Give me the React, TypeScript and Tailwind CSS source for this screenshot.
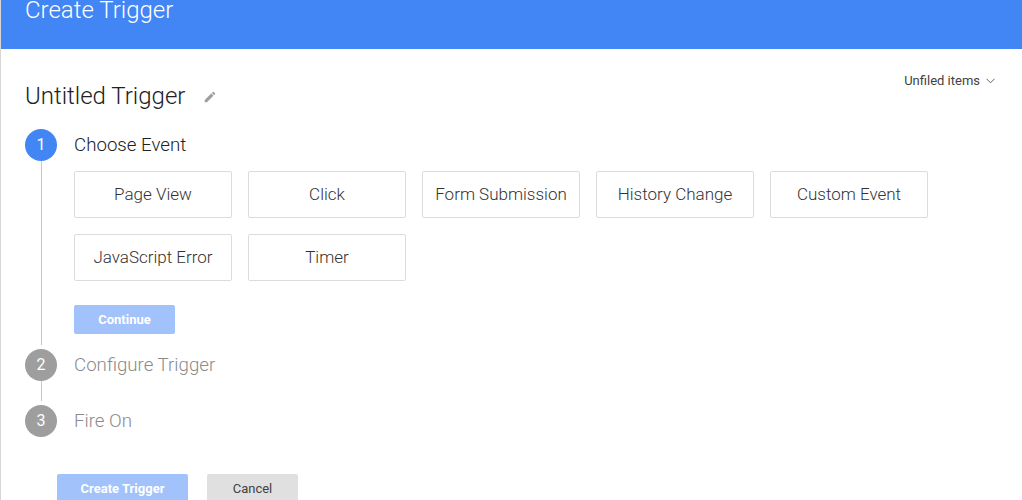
import React from 'react';

const events = [
  'Page View',
  'Click',
  'Form Submission',
  'History Change',
  'Custom Event',
  'JavaScript Error',
  'Timer',
];

const StepCircle = ({ n, active }: { n: number; active?: boolean }) => (
  <div
    className={`w-8 h-8 rounded-full flex items-center justify-center text-white text-[16px] shrink-0 ${
      active ? 'bg-[#4285f4]' : 'bg-[#9e9e9e]'
    }`}
  >
    {n}
  </div>
);

const Pencil = () => (
  <svg width="14" height="14" viewBox="0 0 24 24" fill="#9e9e9e">
    <path d="M3 17.25V21h3.75L17.81 9.94l-3.75-3.75L3 17.25zM20.71 7.04a1 1 0 0 0 0-1.41l-2.34-2.34a1 1 0 0 0-1.41 0l-1.83 1.83 3.75 3.75 1.83-1.83z" />
  </svg>
);

const Chevron = () => (
  <svg width="9" height="6" viewBox="0 0 9 6" fill="none" stroke="#616161" strokeWidth="1">
    <path d="M0.5 0.8 L4.5 4.8 L8.5 0.8" />
  </svg>
);

export default function App() {
  return (
    <div className="w-[1022px] h-[500px] overflow-hidden bg-white border-l border-[#d6d6d6] font-['Roboto',sans-serif]">
      <header className="h-[49px] bg-[#4285f4] pl-[24px]">
        <h1 className="text-white text-[24px] leading-[20px] font-light">Create Trigger</h1>
      </header>

      <div className="pl-[24px] pr-[27px]">
        <div className="flex justify-between items-start">
          <div className="flex items-center mt-[35px]">
            <h2 className="text-[24px] leading-none text-[#212121] font-light">Untitled Trigger</h2>
            <span className="ml-[18px] mt-[2px]">
              <Pencil />
            </span>
          </div>
          <button className="mt-[22px] flex items-center gap-[6px] text-[13px] text-[#424242]">
            Unfiled items
            <Chevron />
          </button>
        </div>

        <div className="mt-[21px]">
          {/* step 1 */}
          <div className="flex">
            <div className="flex flex-col items-center w-8">
              <StepCircle n={1} active />
              <div className="w-px flex-1 bg-[#c8c8c8] mb-[4px]" />
            </div>
            <div className="ml-[17px] pb-[15px]">
              <div className="h-8 flex items-center text-[18.7px] font-light text-[#212121]">Choose Event</div>
              <div className="mt-[10px] grid grid-cols-[repeat(5,158px)] gap-4">
                {events.map((e) => (
                  <button
                    key={e}
                    className="h-[47px] bg-white border border-[#dcdcdc] rounded-[2px] text-[17px] font-light text-[#333]"
                  >
                    {e}
                  </button>
                ))}
              </div>
              <button className="mt-[24px] w-[101px] h-[29px] rounded-[2px] bg-[#a1c2fa] text-white text-[13px] font-bold">
                Continue
              </button>
            </div>
          </div>

          {/* step 2 */}
          <div className="flex">
            <div className="flex flex-col items-center w-8">
              <StepCircle n={2} />
              <div className="w-px h-[20px] bg-[#c8c8c8] mb-[4px]" />
            </div>
            <div className="ml-[17px]">
              <div className="h-8 flex items-center text-[18.7px] font-light text-[#8a8a8a]">Configure Trigger</div>
            </div>
          </div>

          {/* step 3 */}
          <div className="flex">
            <div className="flex flex-col items-center w-8">
              <StepCircle n={3} />
            </div>
            <div className="ml-[17px]">
              <div className="h-8 flex items-center text-[18.7px] font-light text-[#8a8a8a]">Fire On</div>
            </div>
          </div>
        </div>

        <div className="mt-[37px] ml-[32px] flex gap-[19px]">
          <button className="w-[131px] h-[29px] rounded-[2px] bg-[#a1c2fa] text-white text-[13px] font-bold">
            Create Trigger
          </button>
          <button className="w-[91px] h-[29px] rounded-[2px] bg-[#e0e0e0] text-[#424242] text-[13px]">
            Cancel
          </button>
        </div>
      </div>
    </div>
  );
}
